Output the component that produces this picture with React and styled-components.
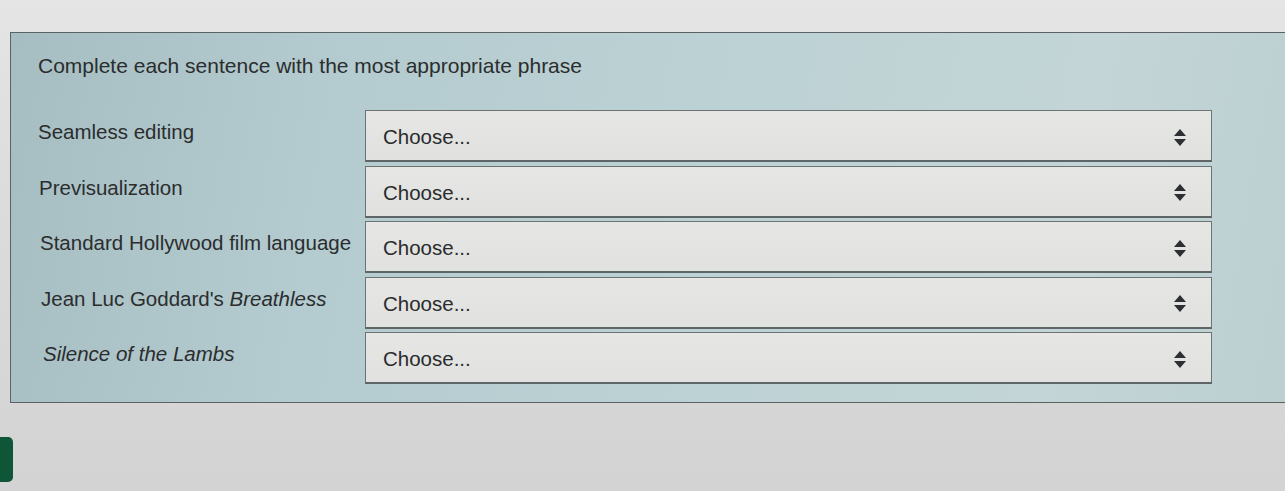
import React from "react";
import styled, { createGlobalStyle } from "styled-components";

const GlobalStyle = createGlobalStyle`
  html, body {
    margin: 0;
    padding: 0;
    overflow: hidden;
  }
  body {
    width: 1285px;
    height: 491px;
    background: linear-gradient(180deg, #e6e5e5 0%, #dddcdc 40%, #d4d3d3 100%);
    font-family: "Liberation Sans", Arial, sans-serif;
    color: #2b2d2e;
  }
`;

const Page = styled.div`
  display: flex;
  flex-direction: column;
  padding-top: 32px;
`;

const Panel = styled.div`
  margin-left: 10px;
  width: 1300px;
  box-sizing: border-box;
  border: 1px solid #5c6263;
  border-right: none;
  background: linear-gradient(
    100deg,
    #a6bec2 0%,
    #b4cbcf 25%,
    #bdd2d5 55%,
    #c3d5d6 80%,
    #bccfd0 100%
  );
  padding: 21px 0 18px 27px;
`;

const Title = styled.div`
  font-size: 21px;
  line-height: 24px;
  margin-bottom: 32px;
`;

const Rows = styled.div`
  display: flex;
  flex-direction: column;
  gap: 3.5px;
`;

const Row = styled.div`
  display: grid;
  grid-template-columns: 327px 847px;
  align-items: start;
`;

const Label = styled.div`
  font-size: 20.5px;
  line-height: 24px;
  padding-top: 10px;
  padding-left: ${(p) => p.$shift}px;

  em {
    font-style: italic;
  }
`;

const SelectBox = styled.div`
  height: 52px;
  box-sizing: border-box;
  border: 1px solid #6c7373;
  border-bottom: 2px solid #5e6566;
  background: linear-gradient(180deg, #e6e6e4 0%, #e1e1df 100%);
  display: flex;
  align-items: center;
  justify-content: space-between;
  padding: 3px 25px 0 17px;
`;

const SelectText = styled.span`
  font-size: 20.5px;
  color: #2a2c2d;
`;

const Stepper = () => (
  <svg width="12" height="17" viewBox="0 0 12 17">
    <path d="M6 0 L12 7 H0 Z" fill="#2d3032" />
    <path d="M0 10 H12 L6 17 Z" fill="#2d3032" />
  </svg>
);

const GreenButton = styled.button`
  margin-top: 34px;
  width: 13px;
  height: 45px;
  border: none;
  padding: 0;
  border-radius: 0 5px 5px 0;
  background: #0f5538;
`;

const rows = [
  { label: <>Seamless editing</>, shift: 0 },
  { label: <>Previsualization</>, shift: 1 },
  { label: <>Standard Hollywood film language</>, shift: 2 },
  {
    label: (
      <>
        Jean Luc Goddard's <em>Breathless</em>
      </>
    ),
    shift: 3,
  },
  { label: <em>Silence of the Lambs</em>, shift: 5 },
];

export default function App() {
  return (
    <>
      <GlobalStyle />
      <Page>
        <Panel>
          <Title>Complete each sentence with the most appropriate phrase</Title>
          <Rows>
            {rows.map((row, i) => (
              <Row key={i}>
                <Label $shift={row.shift}>{row.label}</Label>
                <SelectBox>
                  <SelectText>Choose...</SelectText>
                  <Stepper />
                </SelectBox>
              </Row>
            ))}
          </Rows>
        </Panel>
        <GreenButton aria-label="Check" />
      </Page>
    </>
  );
}
